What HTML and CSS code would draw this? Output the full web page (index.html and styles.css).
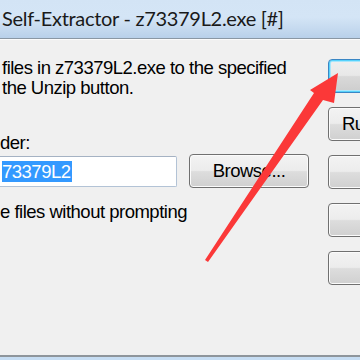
FILE: index.html
```html
<!DOCTYPE html>
<html>
<head>
<meta charset="utf-8">
<link rel="stylesheet" href="styles.css">
</head>
<body>
<div class="window">
  <div class="titlebar"><span class="title">Self-Extractor - z73379L2.exe [#]</span></div>
  <div class="client">
    <div class="left">
      <p class="intro">files in z73379L2.exe to the specified<br>the Unzip button.</p>
      <div class="label">der:</div>
      <div class="row">
        <div class="textbox"><span class="sel">73379L2</span></div>
        <button class="btn browse">Browse...</button>
      </div>
      <div class="check">e files without prompting</div>
    </div>
    <div class="right">
      <button class="btn side focused"></button>
      <button class="btn side">Ru</button>
      <button class="btn side"></button>
      <button class="btn side"></button>
      <button class="btn side"></button>
    </div>
  </div>
  <div class="bottom"></div>
</div>
<svg class="arrow" width="360" height="360" viewBox="0 0 360 360">
  <polygon points="338,73 334,103 323,100 208,262 205,260 314,93 310,90" fill="#fb3838"/>
</svg>
</body>
</html>
```
FILE: styles.css
```css
html, body {
  margin: 0;
  padding: 0;
  width: 360px;
  height: 360px;
  overflow: hidden;
  background: #f0f0f0;
}
body {
  position: relative;
  font-family: "Liberation Sans", Arial, sans-serif;
  font-size: 18.5px;
  letter-spacing: -0.5px;
  color: #000;
}
.window {
  display: flex;
  flex-direction: column;
  height: 360px;
}
.titlebar {
  height: 38px;
  background: linear-gradient(#d3e4f5 0%, #d4e5f6 45%, #c3d8ee 80%, #b8d0ea 100%);
  border-bottom: 1px solid #8a97a4;
  box-shadow: 0 1px 0 #fbfbfb;
  display: flex;
  align-items: center;
  padding-left: 2px;
}
.title {
  font-family: "Lato", "Noto Sans", sans-serif;
  font-size: 20px;
  letter-spacing: -0.3px;
  color: #1a1a1a;
  margin-top: -2px;
}
.client {
  flex: 1;
  display: flex;
}
.left {
  width: 328px;
  flex: none;
  padding-left: 2px;
  box-sizing: border-box;
}
.intro {
  margin: 19px 0 0 0;
  line-height: 20px;
}
.label {
  margin-top: 35px;
  line-height: 20px;
  margin-left: -2px;
}
.row {
  display: flex;
  align-items: center;
  gap: 12px;
  margin-top: 1px;
  margin-left: -6px;
}
.textbox {
  width: 181px;
  height: 31px;
  box-sizing: border-box;
  background: #fff;
  border: 1px solid #b3c3d6;
  border-top-color: #a5b2c3;
  border-radius: 2px;
  padding-left: 5px;
  display: flex;
  align-items: center;
}
.sel {
  background: #3399ff;
  color: #fff;
  line-height: 21px;
  padding-right: 1px;
}
.btn {
  font: inherit;
  letter-spacing: inherit;
  height: 34px;
  box-sizing: border-box;
  border: 1px solid #707070;
  border-radius: 4px;
  background: linear-gradient(#f3f3f3 0%, #ececec 48%, #dddddd 52%, #d0d0d0 100%);
  box-shadow: inset 0 0 0 1px #fbfbfb;
  color: #000;
  padding: 0;
}
.browse {
  width: 120px;
  flex: none;
}
.check {
  margin-top: 14px;
  line-height: 20px;
  margin-left: -2px;
}
.right {
  flex: none;
  width: 90px;
  display: flex;
  flex-direction: column;
  gap: 14px;
  padding-top: 20px;
}
.side {
  width: 90px;
  text-align: left;
  padding-left: 13px;
}
.focused {
  border-color: #3a86c4;
  box-shadow: inset 0 0 0 1px #57d2fb, inset 0 0 0 2px #a9e6fb;
  background: linear-gradient(#efefef 0%, #e8e8e8 48%, #d9d9d9 52%, #cdcdcd 100%);
}
.bottom {
  height: 3px;
  border-top: 2px solid #8e959b;
  background: #c6ddf3;
}
.arrow {
  position: absolute;
  left: 0;
  top: 0;
  pointer-events: none;
}
```
